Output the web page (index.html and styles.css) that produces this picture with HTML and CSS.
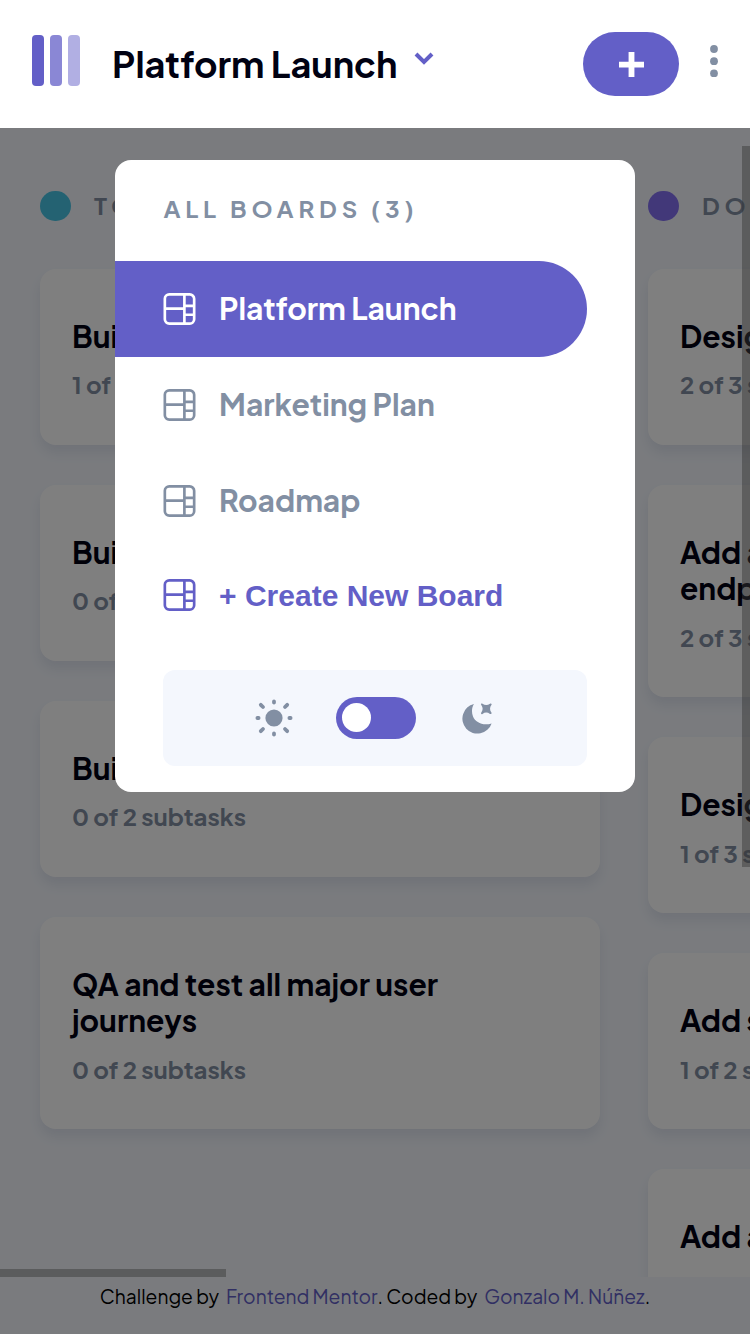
FILE: index.html
```html
<!DOCTYPE html>
<html lang="en">
<head>
<meta charset="utf-8">
<title>Kanban</title>
<link rel="stylesheet" href="styles.css">
</head>
<body>
<svg class="defs" width="0" height="0">
  <symbol id="board" viewBox="0 0 16 16"><path fill="currentColor" d="M0 2.889A2.889 2.889 0 0 1 2.889 0H13.11A2.889 2.889 0 0 1 16 2.889V13.11A2.888 2.888 0 0 1 13.111 16H2.89A2.889 2.889 0 0 1 0 13.111V2.89Zm1.333 5.555v4.667c0 .859.697 1.556 1.556 1.556h6.889V8.444H1.333Zm8.445-1.333V1.333h-6.89A1.556 1.556 0 0 0 1.334 2.89V7.11h8.445Zm1.333-1.333h3.556V2.889c0-.86-.697-1.556-1.556-1.556h-2v4.445Zm0 4.444h3.556V7.111H11.11v3.111Zm0 1.333v3.112h2a1.556 1.556 0 0 0 1.556-1.556v-1.555H11.11Z"/></symbol>
</svg>
<div class="app">
  <header class="header">
    <svg class="logo" viewBox="0 0 24 25.500"><g fill="#635fc7"><rect width="6" height="25.500" rx="2"/><rect opacity=".75" x="9" width="6" height="25.500" rx="2"/><rect opacity=".5" x="18" width="6" height="25.500" rx="2"/></g></svg>
    <h1 class="board-name">Platform Launch</h1>
    <svg class="chevron" viewBox="0 0 10 7"><path d="m1 1 4 4 4-4" fill="none" stroke="#635fc7" stroke-width="2"/></svg>
    <button class="add" aria-label="Add task"><svg viewBox="0 0 12 12"><path fill="#fff" d="M7.4 12V7.4H12V4.7H7.4V0H4.6v4.7H0v2.7h4.6V12z"/></svg></button>
    <svg class="more" viewBox="0 0 8 32"><g fill="#828fa3"><circle cx="4" cy="4" r="3.9"/><circle cx="4" cy="16.200" r="3.9"/><circle cx="4" cy="28.400" r="3.9"/></g></svg>
  </header>
  <div class="stage">
    <main class="board">
      <section class="column">
        <h2 class="column-head"><span class="dot todo"></span><span class="label">TODO (4)</span></h2>
        <article class="card"><h3>Build UI for onboarding flow</h3><p>1 of 3 subtasks</p></article>
        <article class="card"><h3>Build UI for search</h3><p>0 of 1 subtasks</p></article>
        <article class="card"><h3>Build settings UI</h3><p>0 of 2 subtasks</p></article>
        <article class="card"><h3>QA and test all major user<br>journeys</h3><p>0 of 2 subtasks</p></article>
      </section>
      <section class="column">
        <h2 class="column-head"><span class="dot doing"></span><span class="label">DOING (6)</span></h2>
        <article class="card"><h3>Design settings</h3><p>2 of 3 subtasks</p></article>
        <article class="card"><h3>Add account management<br>endpoints</h3><p>2 of 3 subtasks</p></article>
        <article class="card"><h3>Design onboarding flow</h3><p>1 of 3 subtasks</p></article>
        <article class="card"><h3>Add search endpoints</h3><p>1 of 2 subtasks</p></article>
        <article class="card"><h3>Add authentication</h3><p>1 of 2 subtasks</p></article>
      </section>
      <div class="thumb-y"></div>
      <div class="thumb-x"></div>
    </main>
    <footer class="footer"><span>Challenge by</span><a class="link">Frontend Mentor</a><span>. Coded by</span><a class="link">Gonzalo M. Núñez</a><span>.</span></footer>
    <div class="overlay">
      <nav class="menu">
        <h2 class="menu-title">ALL BOARDS (3)</h2>
        <a class="item active"><svg><use href="#board"/></svg><span>Platform Launch</span></a>
        <a class="item"><svg><use href="#board"/></svg><span>Marketing Plan</span></a>
        <a class="item"><svg><use href="#board"/></svg><span>Roadmap</span></a>
        <a class="item create"><svg><use href="#board"/></svg><span>+ Create New Board</span></a>
        <div class="theme">
          <svg class="sun" viewBox="-19 -19 38 38"><circle r="8.6" fill="#828fa3"/><g stroke="#828fa3" stroke-width="3.8" stroke-linecap="round"><path d="M0-16.600v1.200M0 15.400v1.200M-16.600 0h1.200M15.400 0h1.200M-13.200-13.200l2.200 2.200M11 11l2.200 2.200M-13.200 13.200l2.200-2.200M11-11l2.200-2.200"/></g></svg>
          <span class="switch"><span class="knob"></span></span>
          <svg class="moon" viewBox="0 0 31 31"><path fill="#828fa3" d="M13 1A15 15 0 1 0 30.6 20.4C22 23 14.500 19.500 12 13.500C10.300 9 10.800 4 13 1Z"/><path fill="#828fa3" d="M20.300 2C19.300.6 20.500.2 21.500.8Q25.200 3.300 29 .8C30 .2 31.200 1 30.400 2.100Q27.700 5.800 30.400 9.600C31 10.600 30.200 11.500 29 10.900Q25.200 8.300 21.500 10.900C20.300 11.600 19.500 10.600 20.300 9.500Q23 5.800 20.300 2Z"/></svg>
        </div>
      </nav>
    </div>
  </div>
</div>
</body>
</html>
```
FILE: styles.css
```css
* { box-sizing: border-box; margin: 0; padding: 0; }
body { font-family: "Plus Jakarta Sans", Inter, "Liberation Sans", sans-serif; background: #f4f7fd; color: #000112; }
.defs { display: block; }
.app { display: flex; flex-direction: column; width: 750px; height: 1334px; overflow: hidden; }
.header { display: flex; align-items: center; height: 128px; flex: none; padding: 0 32px; background: #fff; }
.logo { width: 48px; height: 51px; margin-top: -7px; }
.board-name { margin-left: 32px; width: 286px; font-size: 36.100px; font-weight: 700; line-height: 48px; white-space: nowrap; }
.chevron { width: 20px; height: 14px; margin: -10px 0 0 16px; }
.add { display: grid; place-items: center; width: 96px; height: 64px; margin-left: auto; border: 0; border-radius: 32px; background: #635fc7; }
.add svg { width: 25px; height: 25px; margin: 1px 0 0 1px; }
.more { width: 8px; height: 32px; margin: -6px 0 0 31.500px; }
.stage { position: relative; flex: 1; display: flex; flex-direction: column; min-height: 0; }
.board { position: relative; flex: none; height: 1149px; display: flex; gap: 48px; padding: 62.500px 40px 0; overflow: hidden; }
.column { flex: none; width: 560px; display: flex; flex-direction: column; gap: 40px; }
.column-head { display: flex; flex: none; align-items: center; gap: 24px; height: 30.500px; margin-bottom: 8.300px; color: #828fa3; font-size: 24px; font-weight: 700; line-height: 30px; letter-spacing: 4.800px; white-space: nowrap; }
.label { margin-top: -2px; }
.dot { width: 30.500px; height: 30.500px; margin-right: -.5px; border-radius: 50%; }
.todo { background: #49c4e5; }
.doing { background: #8471f2; }
.card { flex: none; padding: 48.900px 32px 44.900px; border-radius: 16px; background: #fff; box-shadow: 0 8px 12px rgba(54, 78, 126, .1); white-space: nowrap; }
.card h3 { font-size: 30px; font-weight: 700; line-height: 36.200px; }
.card p { margin-top: 14px; line-height: 32px; font-size: 24px; font-weight: 700; color: #828fa3; }
.thumb-y, .thumb-x { position: absolute; background: rgba(110, 110, 110, .46); }
.thumb-y { right: 0; top: 17.500px; width: 8px; height: 721px; }
.thumb-x { left: 0; bottom: 0; width: 226px; height: 8px; }
.footer { flex: 1; display: flex; align-items: flex-start; justify-content: center; padding-top: 6px; font-size: 19.200px; line-height: 26px; white-space: nowrap; color: #000; }
.link { margin-left: 7px; color: #635fc7; }
.overlay { position: absolute; inset: 0; padding: 32px 0 0 115.400px; background: rgba(0, 0, 0, .5); }
.menu { width: 519.600px; height: 632px; padding-top: 32px; border-radius: 16px; background: #fff; overflow: hidden; }
.menu-title { height: 69px; padding-left: 48px; line-height: 32px; font-size: 24px; font-weight: 700; letter-spacing: 4.800px; color: #828fa3; white-space: nowrap; }
.item { display: flex; align-items: center; gap: 24px; width: 472px; height: 96px; padding-left: 47.500px; color: #828fa3; font-size: 30px; font-weight: 700; white-space: nowrap; }
.item svg { width: 33px; height: 32px; margin-right: -.8px; }
.item span { margin-top: -3px; }
.active { color: #fff; background: #635fc7; border-radius: 0 48px 48px 0; }
.create { height: 93px; padding-bottom: 1px; color: #635fc7; font-family: "Liberation Sans", Arial, sans-serif; }
.create span { margin-top: 1px; }
.theme { display: flex; align-items: center; width: 424px; height: 96px; margin: 28px 0 0 47.800px; padding-left: 92.300px; border-radius: 12px; background: #f4f7fd; }
.sun { width: 38px; height: 38px; }
.switch { width: 80px; height: 42px; margin-left: 43px; padding: 6px; border-radius: 21px; background: #635fc7; }
.knob { display: block; width: 29px; height: 29px; border-radius: 50%; background: #fff; }
.moon { width: 31px; height: 31px; margin-left: 45px; }
```
